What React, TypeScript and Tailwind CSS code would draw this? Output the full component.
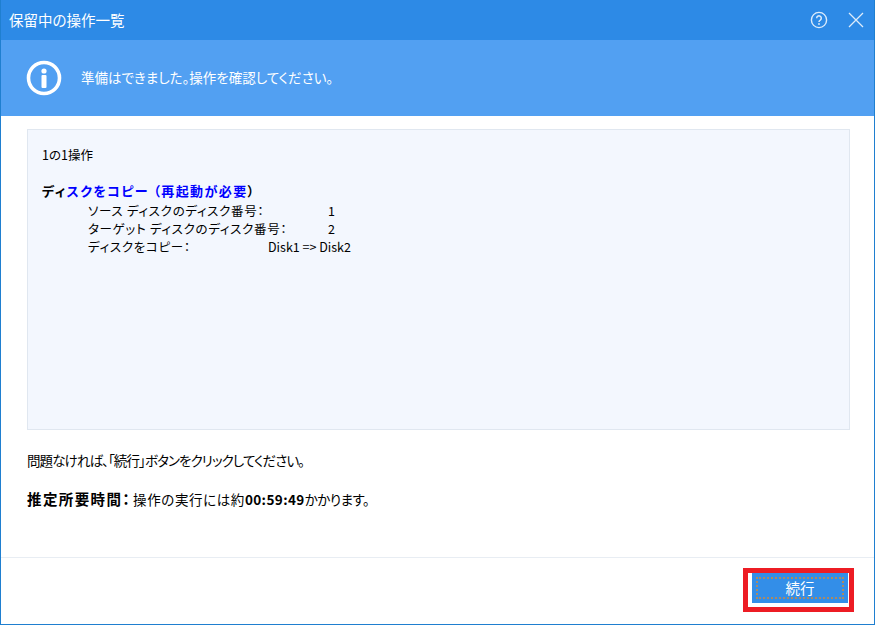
const jp = "font-['Noto_Sans_CJK_JP','Liberation_Sans',sans-serif] [font-feature-settings:'palt']";

const rows = [
  { label: "ソース ディスクのディスク番号：", value: "1", valueClass: "pl-[60px]" },
  { label: "ターゲット ディスクのディスク番号：", value: "2", valueClass: "pl-[60px]" },
  { label: "ディスクをコピー：", value: "Disk1 => Disk2", valueClass: "" },
];

export default function App() {
  return (
    <div className={`${jp} flex h-[625px] w-[875px] flex-col border-x border-b border-[#1f7fd0] bg-white text-[13px] text-black`}>
      {/* title bar */}
      <div className="flex h-[40px] shrink-0 items-center justify-between bg-[#2d8ae6] pl-[8px] pr-[10px] text-white">
        <span className="text-[14.5px] leading-none">保留中の操作一覧</span>
        <div className="flex items-center gap-[20px]">
          <svg width="18" height="18" viewBox="0 0 18 18" fill="none" stroke="#dcecfb" strokeWidth="1.4" aria-hidden>
            <circle cx="9" cy="9" r="7.6" />
            <path d="M6.7 7.2a2.3 2.3 0 1 1 3.6 1.9c-.8.5-1.3 1-1.3 1.9" strokeWidth="1.5" />
            <circle cx="9" cy="13" r=".9" fill="#dcecfb" stroke="none" />
          </svg>
          <svg width="16" height="16" viewBox="0 0 16 16" fill="none" stroke="#dcecfb" strokeWidth="1.3" aria-hidden>
            <path d="M1 1l14 14M15 1L1 15" />
          </svg>
        </div>
      </div>

      {/* info banner */}
      <div className="flex h-[76px] shrink-0 items-center bg-[#52a0f2] pl-[25px] text-white">
        <svg width="36" height="36" viewBox="0 0 36 36" fill="none" aria-hidden>
          <circle cx="18" cy="18" r="15.5" stroke="white" strokeWidth="3.6" />
          <circle cx="18" cy="11" r="2.6" fill="white" />
          <rect x="15.5" y="15" width="5" height="13" rx="1" fill="white" />
        </svg>
        <span className="ml-[19px] text-[13.5px] leading-none">準備はできました。操作を確認してください。</span>
      </div>

      <div className="flex min-h-0 flex-1 flex-col pl-[26px] pr-[24px] pt-[13px]">
        {/* operation list */}
        <div className="flex h-[301px] shrink-0 flex-col border border-[#e0e7f0] bg-[#f3f7fe] pl-[14px] pt-[16px] text-[12.5px] leading-[18px]">
          <div>1の1操作</div>
          <div className="mt-[18px] whitespace-nowrap text-[13px] font-bold tracking-[1.4px] text-[#0000ff]">
            <span className="text-black">ディ</span>スクをコピー （再起動が必要<span className="text-black">）</span>
          </div>
          <div className="mt-[2px] flex flex-col pl-[46px]">
            {rows.map((row) => (
              <div key={row.label} className="flex h-[18px] items-center whitespace-nowrap">
                <span className="w-[180px] shrink-0 tracking-[0.7px]">{row.label}</span>
                <span className={row.valueClass}>{row.value}</span>
              </div>
            ))}
          </div>
        </div>

        <p className="mt-[21px] text-[13.5px] leading-[18px] tracking-[-0.9px]">問題なければ、「続行」ボタンをクリックしてください。</p>
        <p className="mt-[21px] whitespace-nowrap text-[13.5px] leading-[18px]">
          <span className="text-[14.5px] font-bold tracking-[1.4px]">推定所要時間：</span>
          <span className="ml-[2px] tracking-[0.6px]">操作の実行には約</span>
          <span className="font-bold tracking-[0.4px]">00:59:49</span>
          <span className="tracking-[-0.5px]">かかります。</span>
        </p>
      </div>

      {/* footer */}
      <div className="flex h-[67px] shrink-0 items-start justify-end border-t border-[#e8edf3] pr-[20px] pt-[10px]">
        <div className="box-border flex h-[44px] w-[111px] items-start justify-end border-[5px] border-[#ed1c24] bg-white">
          <button className="mr-[1px] flex h-[30px] w-[96px] items-center justify-center bg-[#338ee8] p-[4px] text-[14.5px] text-white">
            <span className="flex h-full w-full items-center justify-center border-2 border-dotted border-[#a98a66]">続行</span>
          </button>
        </div>
      </div>
    </div>
  );
}
